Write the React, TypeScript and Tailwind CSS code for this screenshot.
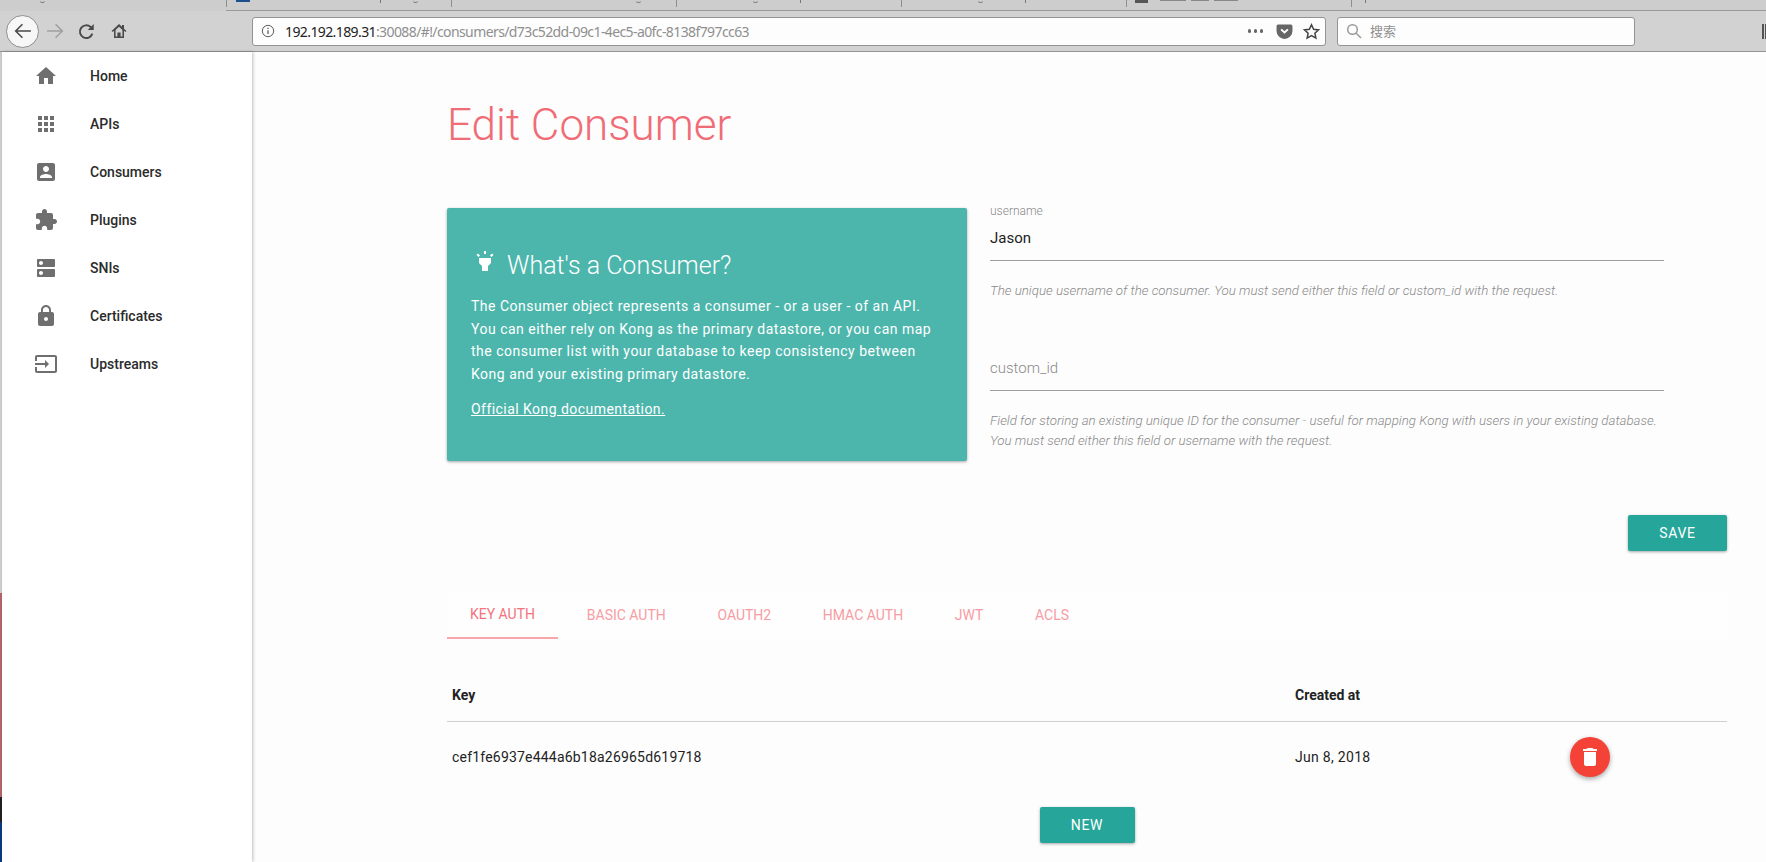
import React from 'react'

const roboto = 'font-["Roboto",sans-serif]'

const navItems = [
  { label: 'Home', d: 'M10 20v-6h4v6h5v-8h3L12 3 2 12h3v8z' },
  { label: 'APIs', d: 'M4 8h4V4H4v4zm6 12h4v-4h-4v4zm-6 0h4v-4H4v4zm0-6h4v-4H4v4zm6 0h4v-4h-4v4zm6-10v4h4V4h-4zm-6 4h4V4h-4v4zm6 6h4v-4h-4v4zm0 6h4v-4h-4v4z' },
  { label: 'Consumers', d: 'M3 5v14c0 1.1.89 2 2 2h14c1.1 0 2-.9 2-2V5c0-1.1-.9-2-2-2H5c-1.11 0-2 .9-2 2zm12 4c0 1.66-1.34 3-3 3s-3-1.34-3-3 1.34-3 3-3 3 1.34 3 3zm-9 8c0-2 4-3.1 6-3.1s6 1.1 6 3.1v1H6v-1z' },
  { label: 'Plugins', d: 'M20.5 11H19V7c0-1.1-.9-2-2-2h-4V3.5C13 2.12 11.88 1 10.5 1S8 2.12 8 3.5V5H4c-1.1 0-1.99.9-1.99 2v3.8H3.5c1.49 0 2.7 1.21 2.7 2.7s-1.21 2.7-2.7 2.7H2V20c0 1.1.9 2 2 2h3.8v-1.5c0-1.49 1.21-2.7 2.7-2.7 1.49 0 2.7 1.21 2.7 2.7V22H17c1.1 0 2-.9 2-2v-4h1.5c1.38 0 2.5-1.12 2.5-2.5S21.88 11 20.5 11z' },
  { label: 'SNIs', d: 'M20 13H4c-.55 0-1 .45-1 1v6c0 .55.45 1 1 1h16c.55 0 1-.45 1-1v-6c0-.55-.45-1-1-1zM7 19c-1.1 0-2-.9-2-2s.9-2 2-2 2 .9 2 2-.9 2-2 2zM20 3H4c-.55 0-1 .45-1 1v6c0 .55.45 1 1 1h16c.55 0 1-.45 1-1V4c0-.55-.45-1-1-1zM7 9c-1.1 0-2-.9-2-2s.9-2 2-2 2 .9 2 2-.9 2-2 2z' },
  { label: 'Certificates', d: 'M18 8h-1V6c0-2.76-2.24-5-5-5S7 3.24 7 6v2H6c-1.1 0-2 .9-2 2v10c0 1.1.9 2 2 2h12c1.1 0 2-.9 2-2V10c0-1.1-.9-2-2-2zm-6 9c-1.1 0-2-.9-2-2s.9-2 2-2 2 .9 2 2-.9 2-2 2zm3.1-9H8.9V6c0-1.71 1.39-3.1 3.1-3.1 1.71 0 3.1 1.39 3.1 3.1v2z' },
  { label: 'Upstreams', d: 'M21 3.01H3c-1.1 0-2 .9-2 2V9h2V4.99h18v14.03H3V15H1v4.01c0 1.1.9 1.98 2 1.98h18c1.1 0 2-.88 2-1.98v-14c0-1.11-.9-2-2-2zM11 16l4-4-4-4v3H1v2h10v3z' },
]

const tabs = ['BASIC AUTH', 'OAUTH2', 'HMAC AUTH', 'JWT', 'ACLS']

const Mi = ({ d, className }: { d: string; className?: string }) => (
  <svg viewBox="0 0 24 24" fill="currentColor" className={className}>
    <path d={d} />
  </svg>
)

// the browser tabs are cut off by the top of the shot, only the tails of letters show
const Tail = ({ className }: { className: string }) => <div className={`${className} w-[5px] h-[3px] rounded-b-[3px] border-b border-[#777]`} />

const Tick = ({ className }: { className: string }) => <div className={`${className} w-[1px] h-[3px] bg-[#777]`} />

const TabCell = ({ children }: { children?: React.ReactNode }) => (
  <div className="w-[225px] shrink-0 h-[10px] flex overflow-hidden">
    <div className="w-[1px] h-[7px] bg-[#8f8f8f] shrink-0" />
    {children}
  </div>
)

const Toolbar = () => (
  <div className="h-[52px] shrink-0 bg-[#d2d2d2] border-b border-[#949494] flex flex-col">
    <div className="h-[11px] flex shrink-0 bg-[#cdcdcd]">
      <div className="w-[226px] shrink-0 flex overflow-hidden">
        <Tail className="ml-[40px]" />
      </div>
      <div className="flex-1 border-b border-[#9a9a9a] flex overflow-hidden">
        <TabCell>
          <div className="ml-[9px] w-[14px] h-[2px] bg-[#1c4f8c]" />
          <Tick className="ml-[130px]" />
          <Tail className="ml-[32px]" />
        </TabCell>
        <TabCell>
          <Tail className="ml-[184px]" />
        </TabCell>
        <TabCell>
          <Tail className="ml-[76px]" />
          <Tick className="ml-[42px]" />
        </TabCell>
        <TabCell>
          <Tail className="ml-[76px]" />
          <Tick className="ml-[42px]" />
        </TabCell>
        <TabCell>
          <div className="ml-[8px] w-[13px] h-[3px] bg-[#555]" />
          <div className="ml-[12px] w-[26px] h-[1px] bg-[#888]" />
          <div className="ml-[5px] w-[18px] h-[1px] bg-[#888]" />
          <div className="ml-[5px] w-[24px] h-[1px] bg-[#888]" />
        </TabCell>
        <TabCell>
          <Tick className="ml-[13px]" />
        </TabCell>
      </div>
    </div>
    <div className="flex items-center flex-1">
      <div className="w-[252px] flex items-center shrink-0 pl-[6px] text-[#4a4a4a]">
        <div className="w-[33px] h-[33px] rounded-full bg-[#f7f7f7] border border-[#8e8e8e] flex items-center justify-center">
          <svg viewBox="0 0 16 16" className="w-[18px] h-[18px]" fill="none" stroke="currentColor" strokeWidth="1.4">
            <path d="M15 8H1.5M7.5 2L1.5 8l6 6" />
          </svg>
        </div>
        <svg viewBox="0 0 16 16" className="w-[18px] h-[18px] ml-[7px] text-[#a0a0a0]" fill="none" stroke="currentColor" strokeWidth="1.4">
          <path d="M1 8h13.5M8.5 2l6 6-6 6" />
        </svg>
        <svg viewBox="0 0 16 16" className="w-[17px] h-[17px] ml-[14px]" fill="none" stroke="currentColor" strokeWidth="1.8">
          <path d="M13.5 10A6 6 0 1 1 11.8 3.7L13.6 5.4" />
          <path d="M14.8 1v5.6H9.2z" fill="currentColor" stroke="none" />
        </svg>
        <svg viewBox="0 0 16 16" className="w-[16px] h-[16px] ml-[16px]" fill="currentColor">
          <path d="M8 1 0.6 8l1 1.1L3 7.8V15h10V7.8l1.4 1.3 1-1.1L13 5.7V2h-2v1.8L8 1zm0 2.7 3.4 3.2v6.6H9.6V9.5H6.4v4H4.6V6.9L8 3.7z" />
        </svg>
      </div>
      <div className="w-[1074px] h-[29px] shrink-0 bg-[#fdfdfd] border border-[#939393] rounded-[3px] flex items-center font-['Noto_Sans',sans-serif] text-[14px] tracking-[-0.6px]">
        <svg viewBox="0 0 16 16" className="w-[14px] h-[14px] ml-[8px] text-[#555]" fill="none" stroke="currentColor" strokeWidth="1.1">
          <circle cx="8" cy="8" r="6.5" />
          <path d="M8 7v4.5M8 4.2v1.5" strokeWidth="1.4" />
        </svg>
        <div className="ml-[10px] flex-1 whitespace-nowrap">
          <span className="text-[#222]">192.192.189.31</span>
          <span className="text-[#8f8f8f]">:30088/#!/consumers/d73c52dd-09c1-4ec5-a0fc-8138f797cc63</span>
        </div>
        <div className="flex gap-[2.5px] mr-[13px]">
          <div className="w-[3.5px] h-[3.5px] rounded-full bg-[#666]" />
          <div className="w-[3.5px] h-[3.5px] rounded-full bg-[#666]" />
          <div className="w-[3.5px] h-[3.5px] rounded-full bg-[#666]" />
        </div>
        <svg viewBox="0 0 16 16" className="w-[17px] h-[17px] text-[#666] mr-[10px]" fill="currentColor">
          <path d="M2 1.5h12a1.5 1.5 0 0 1 1.5 1.5v4.5a7.5 7.5 0 0 1-15 0V3A1.5 1.5 0 0 1 2 1.5z" />
          <path d="M4.8 6 8 9l3.2-3" fill="none" stroke="#fff" strokeWidth="1.8" />
        </svg>
        <svg viewBox="0 0 16 16" className="w-[17px] h-[17px] text-[#444] mr-[5px]" fill="none" stroke="currentColor" strokeWidth="1.4">
          <path d="M8 1.6 10 5.9l4.6.6-3.4 3.1.9 4.6L8 11.9l-4.1 2.3.9-4.6-3.4-3.1 4.6-.6z" />
        </svg>
      </div>
      <div className="ml-[11px] w-[298px] h-[29px] shrink-0 bg-[#fdfdfd] border border-[#939393] rounded-[3px] flex items-center font-['Noto_Sans_CJK_SC',sans-serif] text-[13px] text-[#8f8f8f]">
        <svg viewBox="0 0 16 16" className="w-[16px] h-[16px] ml-[8px] text-[#9a9a9a]" fill="none" stroke="currentColor" strokeWidth="1.5">
          <circle cx="6.5" cy="6.5" r="4.8" />
          <path d="M10 10l5 5" />
        </svg>
        <span className="ml-[8px]">搜索</span>
      </div>
      <div className="ml-[127px] flex items-center gap-[1px] shrink-0">
        <div className="w-[2px] h-[15px] bg-[#555]" />
        <div className="w-[2px] h-[15px] bg-[#555]" />
      </div>
    </div>
  </div>
)

const Sidebar = () => (
  <aside className="w-[252px] shrink-0 flex">
    <div className="w-[2px] flex flex-col shrink-0">
      <div className="h-[541px] bg-[#cfcfcf]" />
      <div className="h-[204px] bg-[#b5666c]" />
      <div className="h-[25px] bg-[#222]" />
      <div className="flex-1 bg-[#0c3b7c]" />
    </div>
    <nav className="flex-1 bg-white shadow-[1px_0_3px_rgba(0,0,0,0.25)]">
      {navItems.map((item) => (
        <div key={item.label} className="h-[48px] flex items-center">
          <Mi d={item.d} className="w-[24px] h-[24px] ml-[32px] text-[#6f6f6f]" />
          <span className="ml-[32px] text-[14px] font-medium text-[#2b2b2b]">{item.label}</span>
        </div>
      ))}
    </nav>
  </aside>
)

export default function App() {
  return (
    <div className={`w-[1766px] h-[862px] overflow-hidden flex flex-col bg-[#fdfdfd] ${roboto}`}>
      <Toolbar />
      <div className="flex flex-1 min-h-0">
        <Sidebar />
        <main className="flex-1 pl-[195px] pr-[39px]">
          <h1 className="text-[44px] font-light leading-[60px] text-[#f06c76] mt-[43px] mb-[53px]">Edit Consumer</h1>
          <div className="flex">
            <div className="w-[520px] h-[253px] shrink-0 bg-[#4db6ac] rounded-[2px] shadow-[0_1px_3px_rgba(0,0,0,0.35)] px-[24px] pt-[41px] text-white">
              <div className="flex items-center h-[32px]">
                <Mi d="M6 14l3 3v5h6v-5l3-3V9H6zm5-12h2v3h-2zM3.5 5.875L4.914 4.46l2.12 2.122L5.62 7.997zm13.46.71l2.123-2.12 1.414 1.414L18.375 8z" className="w-[24px] h-[24px] mb-[8px] ml-[2px]" />
                <span className="ml-[10px] text-[25px] font-light mt-[2px]">What&apos;s a Consumer?</span>
              </div>
              <p className="mt-[14px] text-[14px] leading-[22.5px] tracking-[0.5px]">
                The Consumer object represents a consumer - or a user - of an API.<br />
                You can either rely on Kong as the primary datastore, or you can map<br />
                the consumer list with your database to keep consistency between<br />
                Kong and your existing primary datastore.
              </p>
              <a className="block mt-[13px] text-[14px] leading-[22.5px] tracking-[0.45px] underline">Official Kong documentation.</a>
            </div>
            <div className="ml-[23px] flex-1 pr-[63px]">
              <label className="block -mt-[4px] text-[12px] font-light leading-[14px] text-[#8a8a8a]">username</label>
              <div className="mt-[9px] h-[33px] text-[15px] leading-[22px] text-[#222]">Jason</div>
              <div className="border-b border-[#9e9e9e]" />
              <p className="mt-[20px] text-[13.3px] italic font-light leading-[20px] text-[#8a8a8a] whitespace-nowrap">The unique username of the consumer. You must send either this field or custom_id with the request.</p>
              <div className="mt-[56px] h-[33px] text-[15px] font-light leading-[22px] text-[#8a8a8a]">custom_id</div>
              <div className="border-b border-[#9e9e9e]" />
              <p className="mt-[20px] text-[13.3px] italic font-light leading-[20px] text-[#8a8a8a] whitespace-nowrap">
                Field for storing an existing unique ID for the consumer - useful for mapping Kong with users in your existing database.<br />
                You must send either this field or username with the request.
              </p>
            </div>
          </div>
          <div className="flex justify-end mt-[54px]">
            <button className="w-[99px] h-[36px] bg-[#26a69a] rounded-[2px] text-white text-[14px] tracking-[0.7px] shadow-[0_1px_3px_rgba(0,0,0,0.35)]">SAVE</button>
          </div>
          <div className="mt-[40px] h-[48px] bg-[#fefefe] flex">
            <div className="w-[111px] mr-[3px] h-[48px] flex items-center justify-center text-[14px] text-[#f4737c] border-b-2 border-[#fba6ab]">KEY AUTH</div>
            {tabs.map((tab) => (
              <div key={tab} className="px-[25.8px] h-[48px] flex items-center text-[14px] text-[#f79ca2]">
                {tab}
              </div>
            ))}
          </div>
          <div className="mt-[33px] h-[50px] flex items-center border-b border-[#d0d0d0] text-[14px] font-bold text-[#222] pb-[3px]">
            <div className="w-[848px] pl-[5px]">Key</div>
            <div>Created at</div>
          </div>
          <div className="h-[70px] flex items-center text-[14px] tracking-[0.2px] text-[#222]">
            <div className="w-[848px] pl-[5px]">cef1fe6937e444a6b18a26965d619718</div>
            <div className="w-[275px] tracking-[0.3px]">Jun 8, 2018</div>
            <button className="w-[40px] h-[40px] rounded-full bg-[#f44336] text-white flex items-center justify-center shadow-[0_2px_5px_rgba(0,0,0,0.35)]">
              <Mi d="M6 19c0 1.1.9 2 2 2h8c1.1 0 2-.9 2-2V7H6v12zM19 4h-3.5l-1-1h-5l-1 1H5v2h14V4z" className="w-[24px] h-[24px]" />
            </button>
          </div>
          <div className="flex justify-center mt-[15px]">
            <button className="w-[95px] h-[36px] bg-[#26a69a] rounded-[2px] text-white text-[14px] tracking-[0.7px] shadow-[0_1px_3px_rgba(0,0,0,0.35)]">NEW</button>
          </div>
        </main>
      </div>
    </div>
  )
}
